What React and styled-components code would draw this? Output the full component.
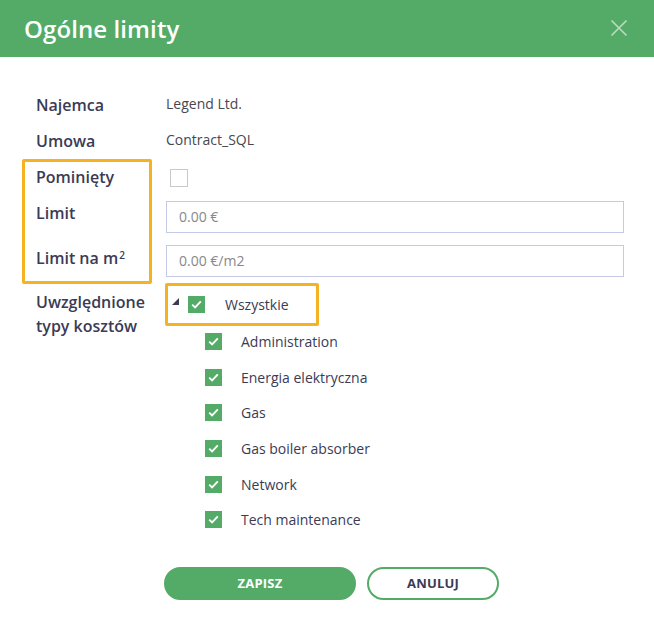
import React, { useState } from "react";
import styled, { createGlobalStyle } from "styled-components";

const GlobalStyle = createGlobalStyle`
  html, body { margin: 0; padding: 0; background: #ffffff; }
  body { font-family: "Open Sans", "Noto Sans", sans-serif; color: #3b3b55; }
  * { box-sizing: border-box; }
`;

const GREEN = "#53ab67";
const ORANGE = "#f5b222";
const INK = "#3b3b55";

const Dialog = styled.div`
  width: 654px;
  height: 629px;
  background: #fff;
  display: flex;
  flex-direction: column;
`;

const Header = styled.header`
  height: 57px;
  background: ${GREEN};
  display: flex;
  align-items: center;
  justify-content: space-between;
  padding: 0 26px 1px 24px;
`;

const Title = styled.h1`
  margin: 0;
  font-size: 24px;
  font-weight: 600;
  color: #fff;
  letter-spacing: 0.1px;
`;

const CloseButton = styled.button`
  border: 0;
  background: none;
  padding: 0;
  width: 18px;
  height: 18px;
  display: flex;
  cursor: pointer;
`;

const Body = styled.div`
  padding: 30px 30px 0 22px;
  display: grid;
  grid-template-columns: 144px 1fr;
`;

const Label = styled.div`
  font-size: 16px;
  font-weight: 600;
  color: ${INK};
  height: ${(p) => p.$h || 36}px;
  padding-top: ${(p) => p.$pt || 0}px;
  display: flex;
  align-items: ${(p) => (p.$top ? "flex-start" : "center")};
  padding-left: 14px;
  line-height: 24px;
  sup { font-size: 10px; position: relative; top: -3px; margin-left: 1px; }
`;

const Value = styled.div`
  font-size: 14px;
  color: #474750;
  height: ${(p) => p.$h || 36}px;
  display: flex;
  align-items: center;
  padding-bottom: 3px;
`;

const Highlight = styled.div`
  grid-column: 1;
  border: 3px solid ${ORANGE};
  border-radius: 2px;
  margin-right: 14px;
  display: flex;
  flex-direction: column;
  ${Label} { padding-left: 11px; }
`;

const FieldColumn = styled.div`
  display: flex;
  flex-direction: column;
`;

const EmptyBox = styled.span`
  width: 18px;
  height: 18px;
  border: 1px solid #c9c9c9;
  background: #fff;
  margin-left: 4px;
  margin-top: 4px;
`;

const Input = styled.input`
  width: 458px;
  height: 32px;
  border: 1px solid #c4c9e6;
  border-radius: 0;
  padding: 0 12px;
  font-family: inherit;
  font-size: 14px;
  color: #444;
  outline: none;
  &::placeholder { color: #888; }
`;

const Tree = styled.div`
  display: flex;
  flex-direction: column;
  margin-left: -1px;
`;

const RootNode = styled.div`
  width: 154px;
  height: 43px;
  border: 3px solid ${ORANGE};
  border-radius: 2px;
  display: flex;
  align-items: center;
  padding-left: 4px;
  margin-top: -1px;
`;

const Toggle = styled.span`
  width: 7px;
  height: 7px;
  margin-right: 9px;
  margin-top: -6px;
  display: flex;
`;

const Check = styled.span`
  width: 17px;
  height: 17px;
  background: ${GREEN};
  display: flex;
  align-items: center;
  justify-content: center;
  flex-shrink: 0;
`;

const NodeText = styled.span`
  font-size: 14px;
  color: ${INK};
  margin-left: ${(p) => p.$gap}px;
`;

const Children = styled.div`
  display: flex;
  flex-direction: column;
  padding-left: 40px;
  margin-top: -2px;
`;

const ChildRow = styled.div`
  height: 35.6px;
  display: flex;
  align-items: center;
`;

const Footer = styled.div`
  display: flex;
  gap: 11px;
  padding: 29px 0 0 164px;
`;

const Button = styled.button`
  height: 33px;
  width: ${(p) => p.$w}px;
  border-radius: 17px;
  border: 2px solid ${GREEN};
  background: ${(p) => (p.$primary ? GREEN : "#fff")};
  color: ${(p) => (p.$primary ? "#fff" : INK)};
  font-family: inherit;
  font-size: 13px;
  font-weight: 700;
  letter-spacing: 0.2px;
  cursor: pointer;
`;

const Tick = () => (
  <svg width="11" height="9" viewBox="0 0 11 9">
    <path d="M1.2 4.6 L4.1 7.4 L9.8 1.4" fill="none" stroke="#fff" strokeWidth="1.9" />
  </svg>
);

const costTypes = [
  "Administration",
  "Energia elektryczna",
  "Gas",
  "Gas boiler absorber",
  "Network",
  "Tech maintenance",
];

export default function App() {
  const [limit, setLimit] = useState("");
  const [limitM2, setLimitM2] = useState("");

  return (
    <Dialog>
      <GlobalStyle />
      <Header>
        <Title>Ogólne limity</Title>
        <CloseButton aria-label="Zamknij">
          <svg width="18" height="18" viewBox="0 0 18 18">
            <path d="M1.5 1.5 L16.5 16.5 M16.5 1.5 L1.5 16.5" stroke="rgba(255,255,255,0.6)" strokeWidth="1.6" />
          </svg>
        </CloseButton>
      </Header>

      <Body>
        <Label>Najemca</Label>
        <Value>Legend Ltd.</Value>
        <Label>Umowa</Label>
        <Value>Contract_SQL</Value>

        <Highlight>
          <Label $h={30}>Pominięty</Label>
          <Label $h={42}>Limit</Label>
          <Label $h={43} $pt={5}>
            Limit na m<sup>2</sup>
          </Label>
        </Highlight>
        <FieldColumn>
          <Value $h={37}>
            <EmptyBox />
          </Value>
          <Value $h={44}>
            <Input placeholder="0.00 €" value={limit} onChange={(e) => setLimit(e.target.value)} />
          </Value>
          <Value $h={44}>
            <Input placeholder="0.00 €/m2" value={limitM2} onChange={(e) => setLimitM2(e.target.value)} />
          </Value>
        </FieldColumn>

        <Label $top $h={250} $pt={6}>
          <span>
            Uwzględnione
            <br />
            typy kosztów
          </span>
        </Label>
        <Tree>
          <RootNode>
            <Toggle>
              <svg width="7" height="7" viewBox="0 0 7 7">
                <path d="M7 0 L7 7 L0 7 Z" fill={INK} />
              </svg>
            </Toggle>
            <Check>
              <Tick />
            </Check>
            <NodeText $gap={20}>Wszystkie</NodeText>
          </RootNode>
          <Children>
            {costTypes.map((t) => (
              <ChildRow key={t}>
                <Check>
                  <Tick />
                </Check>
                <NodeText $gap={19}>{t}</NodeText>
              </ChildRow>
            ))}
          </Children>
        </Tree>
      </Body>

      <Footer>
        <Button $primary $w={192}>ZAPISZ</Button>
        <Button $w={132}>ANULUJ</Button>
      </Footer>
    </Dialog>
  );
}
